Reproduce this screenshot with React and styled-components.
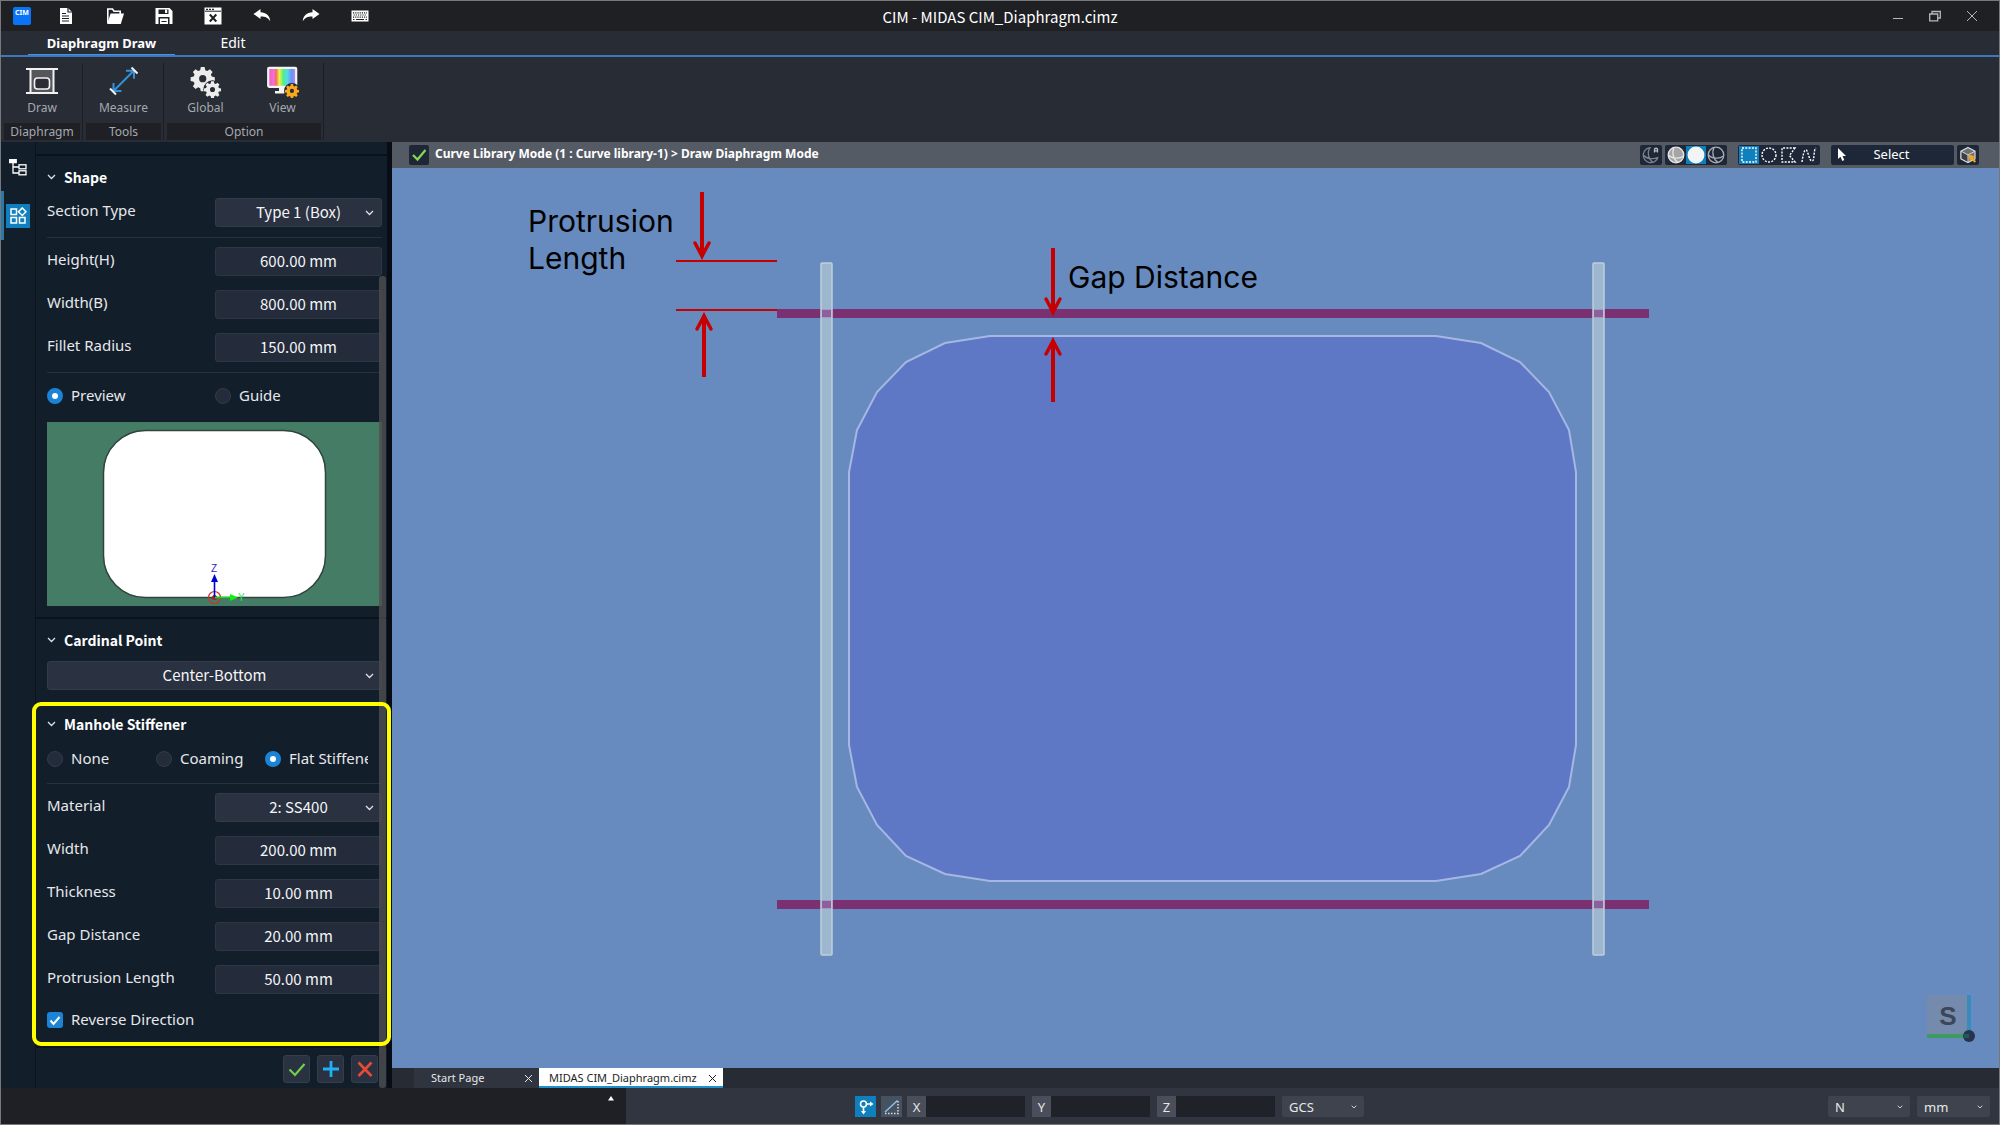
import React, { useState } from 'react';
import styled, { createGlobalStyle } from 'styled-components';

const openingPoints =
  '598,168 553,175 514,194 485,224 465,262 457,304 457,577 465,619 485,657 514,688 553,706 598,713 1044,713 1089,706 1128,688 1157,657 1177,619 1184,577 1184,304 1177,262 1157,224 1128,194 1089,175 1044,168';

const gearPath =
  'M10.2 1h3.6l.6 2.9 1.9.8 2.5-1.6 2.5 2.5-1.6 2.5.8 1.9 2.9.6v3.6l-2.9.6-.8 1.9 1.6 2.5-2.5 2.5-2.5-1.6-1.9.8-.6 2.9h-3.6l-.6-2.9-1.9-.8-2.5 1.6-2.5-2.5 1.6-2.5-.8-1.9-2.9-.6v-3.6l2.9-.6.8-1.9-1.6-2.5 2.5-2.5 2.5 1.6 1.9-.8zM12 8.6a3.4 3.4 0 1 0 0 6.8a3.4 3.4 0 1 0 0-6.8z';

const condensedFont = "'Noto Sans CJK KR', 'Noto Sans', sans-serif";

function Chevron() {
  return (
    <svg width="9" height="6" viewBox="0 0 9 6" fill="none" stroke="currentColor" strokeWidth="1.3">
      <path d="M1 1l3.500 3.500L8 1" />
    </svg>
  );
}

function DocIcon() {
  return (
    <svg width="18" height="18" viewBox="0 0 18 18">
      <path fill="#fff" d="M3 1h8l4 4v12H3z" />
      <path stroke="#1e2024" strokeWidth="1.2" fill="none" d="M11 1v4h4M5 6.5h4M5 9h7M5 11.5h7M5 14h7" />
    </svg>
  );
}

function FolderIcon() {
  return (
    <svg width="18" height="18" viewBox="0 0 18 18">
      <path fill="none" stroke="#fff" strokeWidth="1.6" d="M1.8 16V2h4.7l1.5 2.2h6.2V7" />
      <path fill="#fff" d="M4.6 6.6H18L14.8 17H1.2z" />
    </svg>
  );
}

function SaveIcon() {
  return (
    <svg width="18" height="18" viewBox="0 0 18 18">
      <path fill="#fff" d="M.5 1h14l3 3v13h-3v-7h-11v7h-3z" />
      <path fill="#1e2024" d="M3.500 2.500h10v4.500h-10z" />
      <path fill="#fff" d="M10 2.500h2.200v3.500H10zM5 11.500h8V17H5z" />
      <path stroke="#1e2024" d="M6.500 14.500h5" />
    </svg>
  );
}

function CloseFileIcon() {
  return (
    <svg width="18" height="18" viewBox="0 0 18 18">
      <path fill="#fff" d="M.5.500h17v17H.5z" />
      <path stroke="#1e2024" strokeWidth="1" d="M1 4.200h16" />
      <path fill="#1e2024" d="M2 1.700h2v1.300H2zM5 1.700h2v1.300H5zM8 1.700h2v1.300H8z" />
      <path stroke="#1e2024" strokeWidth="2" d="M5.800 7.500l6.500 7M12.300 7.500l-6.500 7" />
    </svg>
  );
}

function UndoIcon() {
  return (
    <svg width="18" height="18" viewBox="0 0 18 18">
      <path fill="#fff" d="M.5 7L7.500 2v3.300c5.500.2 9.500 3.500 9.700 9-2.300-3.700-5-4.900-9.700-4.800V12z" />
    </svg>
  );
}

function RedoIcon() {
  return (
    <svg width="18" height="18" viewBox="0 0 18 18">
      <path fill="#fff" d="M17.500 7l-7-5v3.300C5 5.500 1 8.800.8 14.300c2.300-3.700 5-4.900 9.700-4.800V12z" />
    </svg>
  );
}

function KeyboardIcon() {
  return (
    <svg width="18" height="18" viewBox="0 0 18 18">
      <rect x=".5" y="3.500" width="17" height="11" fill="#fff" />
      <path stroke="#1e2024" strokeWidth="1.200" strokeDasharray="1.200 1" d="M2 5.800h14M2.600 8h13M2 10.200h14" />
      <path stroke="#1e2024" strokeWidth="1.200" d="M2 12.500h1.500M5 12.500h8M14.500 12.500H16" />
    </svg>
  );
}

function DrawIcon() {
  return (
    <svg width="32" height="30" viewBox="0 0 32 30">
      <path fill="#55575b" d="M4 3h24v24H4z" />
      <path fill="none" stroke="#f2f2f2" strokeWidth="2" d="M0 3h32M0 27h32M4.500 3v24M27.500 3v24" />
      <rect x="8.500" y="12" width="15" height="11" rx="3" fill="#2a2d33" stroke="#f2f2f2" strokeWidth="1.600" />
    </svg>
  );
}

function MeasureIcon() {
  return (
    <svg width="32" height="30" viewBox="0 0 32 30" fill="none">
      <path stroke="#3492d8" strokeWidth="2" d="M6 24.500L25.500 5M5.500 17v8H13.500M18 4.700h8v8" />
      <path stroke="#f2f2f2" strokeWidth="2" d="M2 22.500l6 6M23.500 1.500l6 6" />
    </svg>
  );
}

function GlobalIcon() {
  return (
    <svg width="32" height="32" viewBox="0 0 32 32" fillRule="evenodd">
      <path fill="#ececec" transform="scale(1.060)" d={gearPath} />
      <circle cx="22.500" cy="23.500" r="9.200" fill="#282c35" />
      <path fill="#ececec" transform="translate(13.500 14.500) scale(.75)" d={gearPath} />
    </svg>
  );
}

function ViewIcon() {
  return (
    <svg width="32" height="32" viewBox="0 0 32 32" fillRule="evenodd">
      <defs>
        <linearGradient id="spectrum">
          <stop offset="0" stopColor="#f45ab4" />
          <stop offset=".2" stopColor="#f070e0" />
          <stop offset=".28" stopColor="#f0704a" />
          <stop offset=".4" stopColor="#f0f050" />
          <stop offset=".54" stopColor="#4ff07a" />
          <stop offset=".68" stopColor="#58d8f0" />
          <stop offset=".84" stopColor="#6a90f4" />
          <stop offset="1" stopColor="#c48af0" />
        </linearGradient>
      </defs>
      <rect x="1.200" y="1.800" width="28" height="19" rx="1" fill="url(#spectrum)" stroke="#f4f4f4" strokeWidth="2.200" />
      <path fill="#f4f4f4" d="M12 22h6v3h3v2.500H8V25h4z" />
      <circle cx="25" cy="25" r="8" fill="#282c35" />
      <path fill="#fba81c" transform="translate(17.500 17.500) scale(.62)" d={gearPath} />
    </svg>
  );
}

function TreeIcon() {
  return (
    <svg width="18" height="18" viewBox="0 0 18 18" fill="none" stroke="#fff" strokeWidth="1.300">
      <path fill="#fff" d="M.7 1.700h6.500v3H.7z" />
      <path d="M4 5v10h6M4 9h6" />
      <rect x="10" y="6.800" width="7" height="4" />
      <rect x="10" y="12.800" width="7" height="4" />
    </svg>
  );
}

function ShapesIcon() {
  return (
    <svg width="18" height="18" viewBox="0 0 18 18" fill="none" stroke="#fff" strokeWidth="1.500">
      <rect x="2" y="2" width="5.500" height="5.500" />
      <rect x="2" y="10.500" width="5.500" height="5.500" />
      <rect x="10.500" y="10.500" width="5.500" height="5.500" />
      <path d="M13.300.9l3.700 3.800-3.700 3.800-3.800-3.800z" />
    </svg>
  );
}

function SphereIcon({ fill, stroke = '#a9adb3' }) {
  return (
    <svg width="18" height="18" viewBox="0 0 18 18" fill="none" stroke={stroke} strokeWidth="1.300">
      <circle cx="9" cy="9" r="7.800" fill={fill} />
      <path d="M1.500 9c2.500 3.500 11 4.500 15 1M7 1.500c-2.500 5-.5 12.500 4 15" />
    </svg>
  );
}

function ArcBallIcon() {
  return (
    <svg width="18" height="18" viewBox="0 0 18 18" fill="none" stroke="#7b828c" strokeWidth="1.300">
      <path d="M9 1.700A7.500 7.500 0 1 0 16 11M2 9.500c2.500 3.500 10 4 13.500 2M7.500 2c-2.500 5-1 11.500 3 14" />
      <path stroke="#b8bcc2" d="M12.500 6.500V3q1.500-1.500 3 0v3.500M12.500 4.800h3" />
    </svg>
  );
}

function DashedShape({ children }) {
  return (
    <svg width="18" height="18" viewBox="0 0 18 18" fill="none" stroke="#fff" strokeWidth="1.400" strokeDasharray="2 1.300">
      {children}
    </svg>
  );
}

function CubeIcon() {
  return (
    <svg width="18" height="18" viewBox="0 0 18 18">
      <path fill="#6d7075" stroke="#d8d8d8" strokeWidth="1.200" d="M9 1.500l7 3.700v7.600L9 16.500l-7-3.700V5.200z" />
      <path fill="#3c3f44" stroke="#d8d8d8" d="M2 5.200L9 9v7.500l-7-3.700z" />
      <path fill="none" stroke="#d8d8d8" d="M9 9l7-3.800" />
      <path fill="#f2a722" d="M9.500 8.500l7 2-2.500 1.600 3 3.200-1.500 1.500-3-3.200-1.500 2.400z" />
    </svg>
  );
}

function PreviewDrawing() {
  return (
    <svg width="100%" height="100%" viewBox="0 0 335 184">
      <rect x="56.500" y="8.500" width="222" height="167" rx="42" fill="#fff" stroke="#30443b" strokeWidth="1.500" />
      <circle cx="167.500" cy="175.500" r="6" fill="none" stroke="#d03030" strokeWidth="1.200" />
      <circle cx="167.500" cy="175.500" r="2.500" fill="#b02020" />
      <path stroke="#0000d8" strokeWidth="1.600" d="M167.500 175V157" />
      <path fill="#0000d8" d="M167.500 152l3.500 8h-7z" />
      <path stroke="#10e010" strokeWidth="1.600" d="M168 175.500h16" />
      <path fill="#10f010" d="M191 175.500l-8-3.500v7z" />
      <text x="164" y="150" fontSize="10" fill="#2a2ab8" fontFamily="Liberation Sans, sans-serif">Z</text>
      <text x="191" y="179" fontSize="10" fill="#30e850" fontFamily="Liberation Sans, sans-serif">Y</text>
    </svg>
  );
}

function Arrow({ x, tail, tip }) {
  const back = tail < tip ? -1 : 1;
  return (
    <g fill="none" stroke="#c60000" strokeWidth="4">
      <path d={`M${x} ${tail}V${tip + back * 5}`} />
      <path strokeLinecap="round" strokeWidth="3.500" d={`M${x - 7} ${tip + back * 17}L${x} ${tip + back * 4}L${x + 7} ${tip + back * 17}`} />
      <path fill="#c60000" stroke="none" d={`M${x} ${tip}l4 ${back * 10}h-8z`} />
    </g>
  );
}

function Scene() {
  return (
    <svg width="100%" height="100%" viewBox="0 0 1607 900" role="img" aria-label="Diaphragm">
      <polygon points={openingPoints} fill="#5f78c5" stroke="#a6b7e4" strokeWidth="2" />
      <path fill="#7a3071" d="M385 141h872v9H385zM385 732h872v9H385z" />
      <g fill="#b7cad9" fillOpacity=".7" stroke="#bdd0da" strokeWidth="1.500">
        <rect x="429" y="95" width="11" height="692" rx="1" />
        <rect x="1201" y="95" width="11" height="692" rx="1" />
      </g>
      <path fill="#8e5f9e" d="M430 142h9v7h-9zM1202 142h9v7h-9zM430 733h9v7h-9zM1202 733h9v7h-9z" />
      <path stroke="#c60000" strokeWidth="2" d="M284 93h101M284 142h101" />
      <Arrow x={310} tail={24} tip={92} />
      <Arrow x={312} tail={209} tip={144} />
      <Arrow x={661} tail={80} tip={148} />
      <Arrow x={661} tail={234} tip={169} />
      <g fill="#000" fontSize="30" fontFamily="Inter, sans-serif">
        <text x="136" y="64">Protrusion</text>
        <text x="136" y="101">Length</text>
        <text x="676" y="120">Gap Distance</text>
      </g>
    </svg>
  );
}

function Field({ id, label, value, options }) {
  return (
    <Row>
      <Label htmlFor={id}>{label}</Label>
      <ControlBox>
        {options ? <Combo id={id} options={options} /> : <TextBox id={id} defaultValue={value} />}
      </ControlBox>
    </Row>
  );
}

function Combo({ id, options, label }) {
  return (
    <SelectWrap>
      <Select id={id} aria-label={label} defaultValue={options[0]}>
        {options.map((option) => (
          <option key={option}>{option}</option>
        ))}
      </Select>
      <Chevron />
    </SelectWrap>
  );
}

function RadioGroup({ name, options, initial, wide }) {
  const [selected, setSelected] = useState(initial);

  return (
    <RadioRow>
      {options.map((option) => (
        <RadioLabel key={option} $wide={wide}>
          <Radio
            type="radio"
            name={name}
            checked={selected === option}
            onChange={() => setSelected(option)}
          />
          <span>{option}</span>
        </RadioLabel>
      ))}
    </RadioRow>
  );
}

const quickActions = [
  ['New', DocIcon],
  ['Open', FolderIcon],
  ['Save', SaveIcon],
  ['Close file', CloseFileIcon],
  ['Undo', UndoIcon],
  ['Redo', RedoIcon],
  ['Keyboard', KeyboardIcon],
];

export default function App() {
  return (
    <Page>
      <GlobalStyle />
      <TitleBar>
        <QuickActions>
          <Logo>CIM</Logo>
          {quickActions.map(([name, Icon]) => (
            <QuickButton key={name} aria-label={name}>
              <Icon />
            </QuickButton>
          ))}
        </QuickActions>
        <WindowTitle>CIM - MIDAS CIM_Diaphragm.cimz</WindowTitle>
        <WindowButtons>
          <WindowButton aria-label="Minimize">
            <svg width="12" height="12" viewBox="0 0 12 12" stroke="#b5b7ba"><path d="M1 8.500h10" /></svg>
          </WindowButton>
          <WindowButton aria-label="Restore">
            <svg width="12" height="12" viewBox="0 0 12 12" fill="none" stroke="#b5b7ba" strokeWidth="1.300">
              <path d="M3 4V1.500h8.300V8H9M.7 4h8v6.800h-8z" />
            </svg>
          </WindowButton>
          <WindowButton aria-label="Close">
            <svg width="12" height="12" viewBox="0 0 12 12" stroke="#b5b7ba"><path d="M1 1l10 10M11 1L1 11" /></svg>
          </WindowButton>
        </WindowButtons>
      </TitleBar>

      <MenuTabs>
        <MenuTab $active>Diaphragm Draw</MenuTab>
        <MenuTab>Edit</MenuTab>
      </MenuTabs>

      <Ribbon>
        <RibbonGroup $width={82}>
          <RibbonTools>
            <RibbonButton><DrawIcon />Draw</RibbonButton>
          </RibbonTools>
          <GroupName>Diaphragm</GroupName>
        </RibbonGroup>
        <RibbonGroup $width={81}>
          <RibbonTools>
            <RibbonButton><MeasureIcon />Measure</RibbonButton>
          </RibbonTools>
          <GroupName>Tools</GroupName>
        </RibbonGroup>
        <RibbonGroup $width={160}>
          <RibbonTools>
            <RibbonButton><GlobalIcon />Global</RibbonButton>
            <RibbonButton><ViewIcon />View</RibbonButton>
          </RibbonTools>
          <GroupName>Option</GroupName>
        </RibbonGroup>
      </Ribbon>

      <Workspace>
        <Rail>
          <RailButton aria-label="Tree"><TreeIcon /></RailButton>
          <RailButton aria-label="Shapes" $active><ShapesIcon /></RailButton>
        </Rail>

        <Panel>
          <Section $bottom={11}>
            <SectionTitle><Chevron />Shape</SectionTitle>
            <Field id="section-type" label="Section Type" options={['Type 1 (Box)']} />
            <Divider />
            <Rows>
              <Field id="height" label="Height(H)" value="600.00 mm" />
              <Field id="width-b" label="Width(B)" value="800.00 mm" />
              <Field id="fillet" label="Fillet Radius" value="150.00 mm" />
            </Rows>
            <Divider />
            <RadioGroup name="display" options={['Preview', 'Guide']} initial="Preview" wide />
            <Preview><PreviewDrawing /></Preview>
          </Section>
          <Section $bottom={13}>
            <SectionTitle><Chevron />Cardinal Point</SectionTitle>
            <Combo label="Cardinal Point" options={['Center-Bottom']} />
          </Section>
          <Section $bottom={12} $highlighted>
            <SectionTitle><Chevron />Manhole Stiffener</SectionTitle>
            <RadioGroup name="stiffener" options={['None', 'Coaming', 'Flat Stiffener']} initial="Flat Stiffener" />
            <Divider />
            <Rows>
              <Field id="material" label="Material" options={['2: SS400']} />
              <Field id="width" label="Width" value="200.00 mm" />
              <Field id="thickness" label="Thickness" value="10.00 mm" />
              <Field id="gap" label="Gap Distance" value="20.00 mm" />
              <Field id="protrusion" label="Protrusion Length" value="50.00 mm" />
            </Rows>
            <CheckLabel>
              <Checkbox type="checkbox" defaultChecked />
              <span>Reverse Direction</span>
              <svg width="12" height="10" viewBox="0 0 12 10" fill="none" stroke="#fff" strokeWidth="2">
                <path d="M1.500 4.500l3 3.500 6-7" />
              </svg>
            </CheckLabel>
          </Section>
          <PanelFooter>
            <FooterButton aria-label="Apply">
              <svg width="20" height="18" viewBox="0 0 20 18" fill="none" stroke="#6fd04c" strokeWidth="2.200"><path d="M2.500 9.500L8 15 17.500 4" /></svg>
            </FooterButton>
            <FooterButton aria-label="Add">
              <svg width="20" height="18" viewBox="0 0 20 18" fill="none" stroke="#1fb0f5" strokeWidth="2.800"><path d="M10 1v16M2 9h16" /></svg>
            </FooterButton>
            <FooterButton aria-label="Cancel">
              <svg width="20" height="18" viewBox="0 0 20 18" fill="none" stroke="#e84a36" strokeWidth="2.600"><path d="M3.500 2.500l13 13.500M16.500 2.500l-13 13.500" /></svg>
            </FooterButton>
          </PanelFooter>
          <ScrollThumb />
        </Panel>

        <Viewport>
          <ViewHeader>
            <ModeButton aria-label="Finish">
              <svg width="16" height="14" viewBox="0 0 16 14" fill="none" stroke="#7fdc52" strokeWidth="2.200"><path d="M2 7l4.500 4.500L14.500 2" /></svg>
            </ModeButton>
            <ModeText>Curve Library Mode (1 : Curve library-1) &gt; Draw Diaphragm Mode</ModeText>
            <ToolGroup $gap={11}>
              <ToolButton aria-label="Auto"><ArcBallIcon /></ToolButton>
            </ToolGroup>
            <ToolGroup $gap={3}>
              <ToolButton aria-label="Shaded"><SphereIcon fill="#a5a5a5" stroke="#e6e6e6" /></ToolButton>
              <ToolButton aria-label="Solid" $active><SphereIcon fill="#f4f4f4" stroke="#f4f4f4" /></ToolButton>
              <ToolButton aria-label="Wireframe"><SphereIcon fill="none" /></ToolButton>
            </ToolGroup>
            <ToolGroup $gap={11}>
              <ToolButton aria-label="Rectangle" $active>
                <DashedShape><rect x="2" y="2" width="14" height="14" /></DashedShape>
              </ToolButton>
              <ToolButton aria-label="Circle">
                <DashedShape><circle cx="9" cy="9" r="7" /></DashedShape>
              </ToolButton>
              <ToolButton aria-label="Polygon">
                <DashedShape><path d="M15 2H2v14h13l-5.500-6.500z" /></DashedShape>
              </ToolButton>
              <ToolButton aria-label="Polyline">
                <DashedShape><path d="M2 16C3 9 4 4 6 4s3 11 6 11 1-11 4-13" /></DashedShape>
              </ToolButton>
            </ToolGroup>
            <SelectTool>
              <svg width="10" height="14" viewBox="0 0 10 14"><path fill="#fff" d="M1 0v11l2.500-2.200L5.300 13l2-.9-1.800-4H9z" /></svg>
              <span>Select</span>
            </SelectTool>
            <ToolGroup $gap={3}>
              <ToolButton aria-label="Pick solid"><CubeIcon /></ToolButton>
            </ToolGroup>
          </ViewHeader>
          <Canvas>
            <Scene />
            <NavCube width="50" height="50" viewBox="0 0 50 50" aria-label="South">
              <path fill="#748bad" d="M0 0h40v40H0z" />
              <text x="21" y="30" textAnchor="middle" fontSize="26" fontWeight="700" fill="#3d4656" fontFamily="Liberation Sans, sans-serif">S</text>
              <path fill="#3f9a62" d="M0 39h38v4H0z" />
              <path fill="#388bbd" d="M40 0h4v38h-4z" />
              <circle cx="42" cy="41" r="6" fill="#27344c" />
              <path fill="#1f5a5c" d="M37 39h5v4h-5z" />
            </NavCube>
          </Canvas>
          <FileTabs>
            <FileTab $width={125}>
              <span>Start Page</span>
              <CloseTab aria-label="Close Start Page">
                <svg width="7" height="7" viewBox="0 0 7 7" stroke="currentColor"><path d="M0 0l7 7M7 0L0 7" /></svg>
              </CloseTab>
            </FileTab>
            <FileTab $width={184} $active>
              <span>MIDAS CIM_Diaphragm.cimz</span>
              <CloseTab aria-label="Close file tab">
                <svg width="7" height="7" viewBox="0 0 7 7" stroke="currentColor"><path d="M0 0l7 7M7 0L0 7" /></svg>
              </CloseTab>
            </FileTab>
          </FileTabs>
        </Viewport>
      </Workspace>

      <StatusBar>
        <StatusLog>
          <svg width="6" height="5" viewBox="0 0 6 5"><path fill="#fff" d="M3 0l3 4.500H0z" /></svg>
        </StatusLog>
        <Coordinates>
          <SnapButton aria-label="Snap" $active>
            <svg width="18" height="18" viewBox="0 0 18 18" fill="none" stroke="#fff" strokeWidth="1.600">
              <circle cx="6.500" cy="6" r="3" />
              <path d="M9.500 6h5M6.500 9v6" />
              <path fill="#fff" stroke="none" d="M13 3.500l3.500 2.500-3.500 2.500zM4 13h5l-2.500 3.500z" />
            </svg>
          </SnapButton>
          <SnapButton aria-label="Slope">
            <svg width="18" height="18" viewBox="0 0 18 18" fill="none" stroke="#d5dde4">
              <path stroke="#8fc0ee" strokeWidth="1.500" d="M2 14L14.500 2.500" />
              <path strokeWidth="1.500" strokeDasharray="1.500 1.500" d="M2 15.500h13V3" />
            </svg>
          </SnapButton>
          {['X', 'Y', 'Z'].map((axis) => (
            <Axis key={axis}>
              <span>{axis}</span>
              <AxisInput />
            </Axis>
          ))}
          <StatusSelect $width={82}>
            <select aria-label="Coordinate system"><option>GCS</option></select>
            <Chevron />
          </StatusSelect>
        </Coordinates>
        <Units>
          <StatusSelect $width={82}>
            <select aria-label="Force"><option>N</option></select>
            <Chevron />
          </StatusSelect>
          <StatusSelect $width={73}>
            <select aria-label="Length"><option>mm</option></select>
            <Chevron />
          </StatusSelect>
        </Units>
      </StatusBar>
    </Page>
  );
}

const GlobalStyle = createGlobalStyle`
  * {
    box-sizing: border-box;
  }

  body {
    margin: 0;
    background: #1e2024;
  }

  body, button, input, select {
    font-family: 'Noto Sans', sans-serif;
    font-size: 15px;
    color: #e6e8ea;
  }

  button, input, select {
    margin: 0;
    padding: 0;
    border: 0;
    background: none;
  }

  svg {
    display: block;
    flex-shrink: 0;
  }
`;

const Page = styled.div`
  display: flex;
  flex-direction: column;
  min-height: 100vh;
  border: 1px solid #76787b;
`;

const TitleBar = styled.header`
  display: grid;
  grid-template-columns: 1fr auto 1fr;
  align-items: center;
  height: 30px;
  background: #1e2024;
`;

const QuickActions = styled.div`
  display: flex;
  align-items: center;
  padding-left: 12px;
`;

const Logo = styled.div`
  width: 18px;
  height: 18px;
  margin-right: 10px;
  border-radius: 2px;
  background: #0a74f6;
  color: #fff;
  font-size: 7px;
  font-weight: 700;
  line-height: 12px;
  text-align: center;
`;

const QuickButton = styled.button`
  display: flex;
  justify-content: center;
  width: 49px;
`;

const WindowTitle = styled.div`
  padding-top: 2px;
  color: #fff;
  font-family: ${condensedFont};
  line-height: 28px;
`;

const WindowButtons = styled.div`
  display: flex;
  justify-content: flex-end;
  padding-right: 9px;
`;

const WindowButton = styled.button`
  display: flex;
  justify-content: center;
  width: 37px;
`;

const MenuTabs = styled.nav`
  display: flex;
  height: 26px;
  padding-left: 27px;
  border-bottom: 2px solid #3c78bb;
  background: #282c35;
`;

const MenuTab = styled.button`
  width: ${(props) => (props.$active ? 147 : 116)}px;
  color: #fff;
  font-size: ${(props) => (props.$active ? 13 : 14)}px;
  font-weight: ${(props) => (props.$active ? 700 : 400)};
  line-height: 24px;
  box-shadow: ${(props) => (props.$active ? 'inset 0 -1px #4a90e2' : 'none')};
`;

const Ribbon = styled.div`
  display: flex;
  height: 85px;
  background: #282c35;
`;

const RibbonGroup = styled.div`
  display: flex;
  flex-direction: column;
  width: ${(props) => props.$width}px;
  margin: 6px 0 2px;
  padding: 0 2px 0 3px;
  border-right: 1px solid #1b1e24;
`;

const RibbonTools = styled.div`
  display: flex;
  flex: 1;
`;

const RibbonButton = styled.button`
  display: flex;
  flex: 1;
  flex-direction: column;
  align-items: center;
  justify-content: space-between;
  padding: 3px 0 7px;
  color: #a4a9b0;
  font-size: 12px;
  line-height: 16px;
`;

const GroupName = styled.div`
  height: 17px;
  background: #1e2025;
  color: #a4a9b0;
  font-size: 12px;
  line-height: 17px;
  text-align: center;
`;

const Workspace = styled.main`
  display: flex;
  flex: 1;
`;

const Rail = styled.nav`
  width: 35px;
  border-right: 1px solid #0c131d;
  background: #131e2b;
`;

const RailButton = styled.button`
  display: flex;
  align-items: center;
  justify-content: center;
  width: 34px;
  height: 49px;
  padding-right: 4px;
  border-left: 3px solid ${(props) => (props.$active ? '#2c79a5' : 'transparent')};

  svg {
    box-sizing: content-box;
    padding: 3px;
    background: ${(props) => (props.$active ? '#0f80bd' : 'none')};
  }
`;

const Panel = styled.aside`
  position: relative;
  width: 356px;
  padding-top: 12px;
  border-right: 5px solid #070c15;
  background: #131e2b;
`;

const Section = styled.section`
  position: relative;
  padding: 0 5px ${(props) => props.$bottom}px 11px;
  border-top: ${(props) => (props.$highlighted ? 0 : 2)}px solid #0b121c;

  &::after {
    content: '';
    display: ${(props) => (props.$highlighted ? 'block' : 'none')};
    position: absolute;
    z-index: 2;
    inset: -1px -4px 0;
    border: 4px solid #ffff00;
    border-radius: 9px;
    pointer-events: none;
  }
`;

const SectionTitle = styled.h2`
  display: flex;
  align-items: center;
  gap: 8px;
  height: 42px;
  margin: 0;
  color: #fff;
  font-family: ${condensedFont};
  font-size: 14px;
  font-weight: 700;
  line-height: 20px;

  svg {
    color: #dfe2e5;
  }
`;

const Rows = styled.div`
  display: grid;
  gap: 14px;
`;

const Row = styled.div`
  display: flex;
  justify-content: space-between;
  height: 29px;
`;

const Label = styled.label`
  line-height: 24px;
`;

const ControlBox = styled.div`
  width: 167px;
`;

const TextBox = styled.input`
  width: 100%;
  height: 29px;
  padding-bottom: 2px;
  border: 1px solid #2d3645;
  border-radius: 3px;
  background: #242c3c;
  color: #f4f5f6;
  font-family: ${condensedFont};
  text-align: center;
`;

const SelectWrap = styled.div`
  position: relative;

  svg {
    position: absolute;
    top: 12px;
    right: 8px;
    color: #dfe2e5;
    pointer-events: none;
  }
`;

const Select = styled.select`
  appearance: none;
  display: block;
  width: 100%;
  height: 29px;
  padding-bottom: 3px;
  border: 1px solid #323b4a;
  border-radius: 3px;
  background: #2a3141;
  color: #f4f5f6;
  font-family: ${condensedFont};
  text-align: center;
  text-align-last: center;
`;

const Divider = styled.hr`
  height: 1px;
  margin: 10px 0 9px;
  border: 0;
  background: #273240;
`;

const RadioRow = styled.div`
  display: flex;
  height: 28px;
  padding-right: 14px;
`;

const RadioLabel = styled.label`
  display: flex;
  align-items: center;
  gap: 8px;
  flex: 0 0 ${(props) => (props.$wide ? 168 : 109)}px;
  min-width: 0;

  span {
    overflow: hidden;
    padding-bottom: 2px;
    line-height: 24px;
    white-space: nowrap;
  }

  &:last-child {
    flex: 1;
  }
`;

const Radio = styled.input`
  appearance: none;
  flex-shrink: 0;
  width: 16px;
  height: 16px;
  border: 1px solid #323b49;
  border-radius: 50%;
  background: #242c3b;

  &:checked {
    border: 5px solid #1c84d6;
    background: #fff;
  }
`;

const Preview = styled.div`
  height: 184px;
  margin-top: 12px;
  background: #457c66;
`;

const CheckLabel = styled.label`
  position: relative;
  display: flex;
  align-items: center;
  gap: 8px;
  height: 28px;
  margin-top: 12px;

  span {
    padding-bottom: 2px;
  }

  svg {
    position: absolute;
    top: 10px;
    left: 2px;
    pointer-events: none;
  }
`;

const Checkbox = styled.input`
  appearance: none;
  width: 16px;
  height: 16px;
  border-radius: 3px;
  background: #242c3b;

  &:checked {
    background: #1c84d6;
  }
`;

const PanelFooter = styled.footer`
  display: flex;
  justify-content: flex-end;
  gap: 7px;
  padding: 7px 9px 4px;
  border-top: 2px solid #0b121c;
`;

const FooterButton = styled.button`
  display: flex;
  align-items: center;
  justify-content: center;
  width: 27px;
  height: 28px;
  border: 1px solid #343d4c;
  border-radius: 3px;
  background: #2a3242;
`;

const ScrollThumb = styled.div`
  position: absolute;
  z-index: 1;
  top: 134px;
  right: 1px;
  bottom: 0;
  width: 7px;
  border-radius: 3px;
  background: rgba(78, 78, 80, 0.8);
`;

const Viewport = styled.section`
  display: flex;
  flex: 1;
  flex-direction: column;
  min-width: 0;
`;

const ViewHeader = styled.div`
  display: flex;
  align-items: center;
  height: 26px;
  padding: 0 20px 0 17px;
  background: #555b65;
`;

const ModeButton = styled.button`
  display: flex;
  align-items: center;
  justify-content: center;
  width: 20px;
  height: 20px;
  border-radius: 2px;
  background: #1f2737;
`;

const ModeText = styled.div`
  flex: 1;
  padding: 0 0 2px 6px;
  color: #fff;
  font-size: 12px;
  font-weight: 700;
  line-height: 20px;
`;

const ToolGroup = styled.div`
  display: flex;
  margin-left: ${(props) => props.$gap}px;
  padding: 1px;
  border-radius: 2px;
  background: #1d2737;
`;

const ToolButton = styled.button`
  display: flex;
  align-items: center;
  justify-content: center;
  width: 20px;
  height: 18px;
  background: ${(props) => (props.$active ? '#0f80bd' : 'none')};
`;

const SelectTool = styled.button`
  display: flex;
  align-items: center;
  width: 123px;
  height: 20px;
  margin-left: 11px;
  padding-left: 6px;
  border-radius: 2px;
  background: #1d2737;
  color: #fff;
  font-size: 13px;

  span {
    flex: 1;
    padding: 0 18px 2px 0;
  }
`;

const Canvas = styled.div`
  position: relative;
  flex: 1;
  min-height: 0;
  background: #678bbf;
`;

const NavCube = styled.svg`
  position: absolute;
  right: 22px;
  bottom: 23px;
`;

const FileTabs = styled.div`
  display: flex;
  height: 20px;
  padding-left: 22px;
  background: #272b33;
`;

const FileTab = styled.div`
  display: flex;
  align-items: center;
  justify-content: space-between;
  width: ${(props) => props.$width}px;
  padding: 2px 5px 0 ${(props) => (props.$active ? 10 : 17)}px;
  border-bottom: 2px solid ${(props) => (props.$active ? '#1f8fd0' : '#2f343e')};
  background: ${(props) => (props.$active ? '#fff' : '#2f343e')};
  color: ${(props) => (props.$active ? '#1c1e22' : '#e6e8ea')};
  font-size: 11px;
  line-height: 16px;
  white-space: nowrap;
`;

const CloseTab = styled.button`
  padding: 2px;
  color: inherit;
`;

const StatusBar = styled.footer`
  display: flex;
  height: 36px;
  background: #30353f;
`;

const StatusLog = styled.div`
  display: flex;
  justify-content: flex-end;
  width: 625px;
  padding: 8px 12px 0 0;
  background: #1e2025;
`;

const Coordinates = styled.div`
  display: flex;
  align-items: center;
  gap: 7px;
  margin-left: 229px;
  padding-top: 1px;
`;

const SnapButton = styled.button`
  display: flex;
  align-items: center;
  justify-content: center;
  width: 21px;
  height: 21px;
  margin-right: -2px;
  background: ${(props) => (props.$active ? '#0f80bd' : '#46525f')};
`;

const Axis = styled.label`
  display: flex;

  span {
    width: 19px;
    height: 21px;
    background: #4a4e5a;
    font-size: 13px;
    line-height: 22px;
    text-align: center;
  }
`;

const AxisInput = styled.input`
  width: 99px;
  height: 21px;
  background: #1f2228;
`;

const Units = styled.div`
  display: flex;
  align-items: center;
  gap: 7px;
  margin-left: auto;
  padding: 1px 9px 0 0;
`;

const StatusSelect = styled.div`
  position: relative;

  select {
    appearance: none;
    display: block;
    width: ${(props) => props.$width}px;
    height: 21px;
    padding-left: 7px;
    border-radius: 2px;
    background: #3f434e;
    font-size: 13px;
  }

  svg {
    position: absolute;
    top: 9px;
    right: 7px;
    width: 6px;
    height: 4px;
    pointer-events: none;
  }
`;
